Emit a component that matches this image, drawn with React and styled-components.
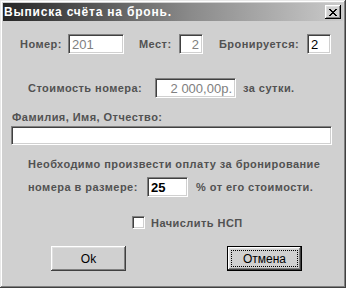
import styled, { createGlobalStyle } from "styled-components";

const Global = createGlobalStyle`
  html, body {
    margin: 0;
    padding: 0;
    background: #d0d0d0;
  }
  * {
    box-sizing: border-box;
  }
`;

const Window = styled.div`
  width: 346px;
  height: 288px;
  padding: 3px;
  background: #d0d0d0;
  box-shadow: inset -1px -1px #404040, inset 1px 1px #e8e8e8,
    inset -2px -2px #808080, inset 2px 2px #ffffff;
  font-family: "Liberation Sans", Arial, sans-serif;
  display: flex;
  flex-direction: column;
`;

const TitleBar = styled.div`
  height: 18px;
  display: flex;
  align-items: center;
  justify-content: space-between;
  padding: 0 2px 0 1px;
  background: linear-gradient(to right, #262626, #8a8a8a 55%, #cacaca);
`;

const TitleText = styled.span`
  color: #ffffff;
  font-weight: bold;
  font-size: 12px;
  letter-spacing: 0.8px;
`;

const CloseButton = styled.div`
  width: 16px;
  height: 14px;
  background: #d0d0d0;
  box-shadow: inset -1px -1px #000000, inset 1px 1px #ffffff,
    inset -2px -2px #808080, inset 2px 2px #dfdfdf;
  display: flex;
  align-items: center;
  justify-content: center;
`;

const Body = styled.div`
  display: flex;
  flex-direction: column;
`;

const Row = styled.div`
  display: flex;
  align-items: center;
  margin-top: ${(p) => p.$top}px;
  padding-left: ${(p) => p.$left}px;
  height: ${(p) => p.$h || 20}px;
`;

const Label = styled.span`
  display: inline-block;
  width: ${(p) => (p.$w ? `${p.$w}px` : "auto")};
  margin-left: ${(p) => p.$ml || 0}px;
  white-space: nowrap;
  color: #525252;
  font-weight: bold;
  font-size: 11px;
  letter-spacing: 0.45px;
  line-height: 14px;
`;

const TextLine = styled.div`
  margin-top: ${(p) => p.$top}px;
  padding-left: ${(p) => p.$left}px;
  color: #525252;
  font-weight: bold;
  font-size: 11px;
  letter-spacing: 0.45px;
  line-height: 14px;
  white-space: nowrap;
`;

const Field = styled.input`
  width: ${(p) => p.$w}px;
  height: ${(p) => p.$h || 20}px;
  margin: 0;
  padding: 0 3px;
  border: 1px solid;
  border-color: #808080 #ffffff #ffffff #808080;
  box-shadow: inset 1px 1px #404040, inset -1px -1px #d0d0d0;
  background: #ffffff;
  outline: none;
  font-family: "Liberation Sans", Arial, sans-serif;
  font-size: 13px;
  font-weight: ${(p) => (p.$bold ? "bold" : "normal")};
  color: ${(p) => (p.$dim ? "#808080" : "#000000")};
  text-align: ${(p) => (p.$right ? "right" : "left")};
`;

const CheckBox = styled.span`
  width: 13px;
  height: 13px;
  margin-right: 6px;
  background: #ffffff;
  border: 1px solid;
  border-color: #808080 #ffffff #ffffff #808080;
  box-shadow: inset 1px 1px #404040, inset -1px -1px #d0d0d0;
`;

const ButtonRow = styled.div`
  display: flex;
  gap: 101px;
  margin-top: 17px;
  padding-left: 48px;
`;

const Button = styled.button`
  width: 75px;
  height: 25px;
  margin: 0;
  padding: 0;
  background: #d0d0d0;
  border: ${(p) => (p.$default ? "1px solid #000000" : "none")};
  box-shadow: inset -1px -1px #404040, inset 1px 1px #ffffff,
    inset -2px -2px #808080, inset 2px 2px #dfdfdf;
  font-family: "Liberation Sans", Arial, sans-serif;
  font-size: 12px;
  color: #000000;
  display: flex;
  align-items: center;
  justify-content: center;
  position: relative;
`;

const FocusRing = styled.span`
  position: absolute;
  inset: 3px;
  border: 1px dotted #000000;
`;

function App() {
  return (
    <>
      <Global />
      <Window>
        <TitleBar>
          <TitleText>Выписка счёта на бронь.</TitleText>
          <CloseButton>
            <svg width="8" height="7" viewBox="0 0 8 7" shapeRendering="crispEdges">
              <path
                d="M0 0h2v1h-2zM6 0h2v1h-2zM1 1h2v1h-2zM5 1h2v1h-2zM2 2h4v1h-4zM3 3h2v1h-2zM2 4h4v1h-4zM1 5h2v1h-2zM5 5h2v1h-2zM0 6h2v1h-2zM6 6h2v1h-2z"
                fill="#000"
              />
            </svg>
          </CloseButton>
        </TitleBar>
        <Body>
          <Row $top={13} $left={17}>
            <Label $w={48}>Номер:</Label>
            <Field $w={56} $dim readOnly value="201" />
            <Label $w={40} $ml={15}>Мест:</Label>
            <Field $w={24} $dim $right readOnly value="2" />
            <Label $w={88} $ml={16}>Бронируется:</Label>
            <Field $w={24} readOnly value="2" />
          </Row>
          <Row $top={24} $left={25}>
            <Label $w={127}>Стоимость номера:</Label>
            <Field $w={81} $dim $right readOnly value="2 000,00р." />
            <Label $ml={7}>за сутки.</Label>
          </Row>
          <TextLine $top={12} $left={9}>Фамилия, Имя, Отчество:</TextLine>
          <Row $top={2} $left={8} $h={19}>
            <Field $w={321} $h={19} readOnly value="" />
          </Row>
          <TextLine $top={12} $left={25}>
            Необходимо произвести оплату за бронирование
          </TextLine>
          <Row $top={6} $left={25}>
            <Label $w={119}>номера в размере:</Label>
            <Field $w={41} $bold readOnly value="25" />
            <Label $ml={8}>% от его стоимости.</Label>
          </Row>
          <Row $top={19} $left={129} $h={13}>
            <CheckBox />
            <Label>Начислить НСП</Label>
          </Row>
          <ButtonRow>
            <Button>Ok</Button>
            <Button $default>
              Отмена
              <FocusRing />
            </Button>
          </ButtonRow>
        </Body>
      </Window>
    </>
  );
}

export default App;
